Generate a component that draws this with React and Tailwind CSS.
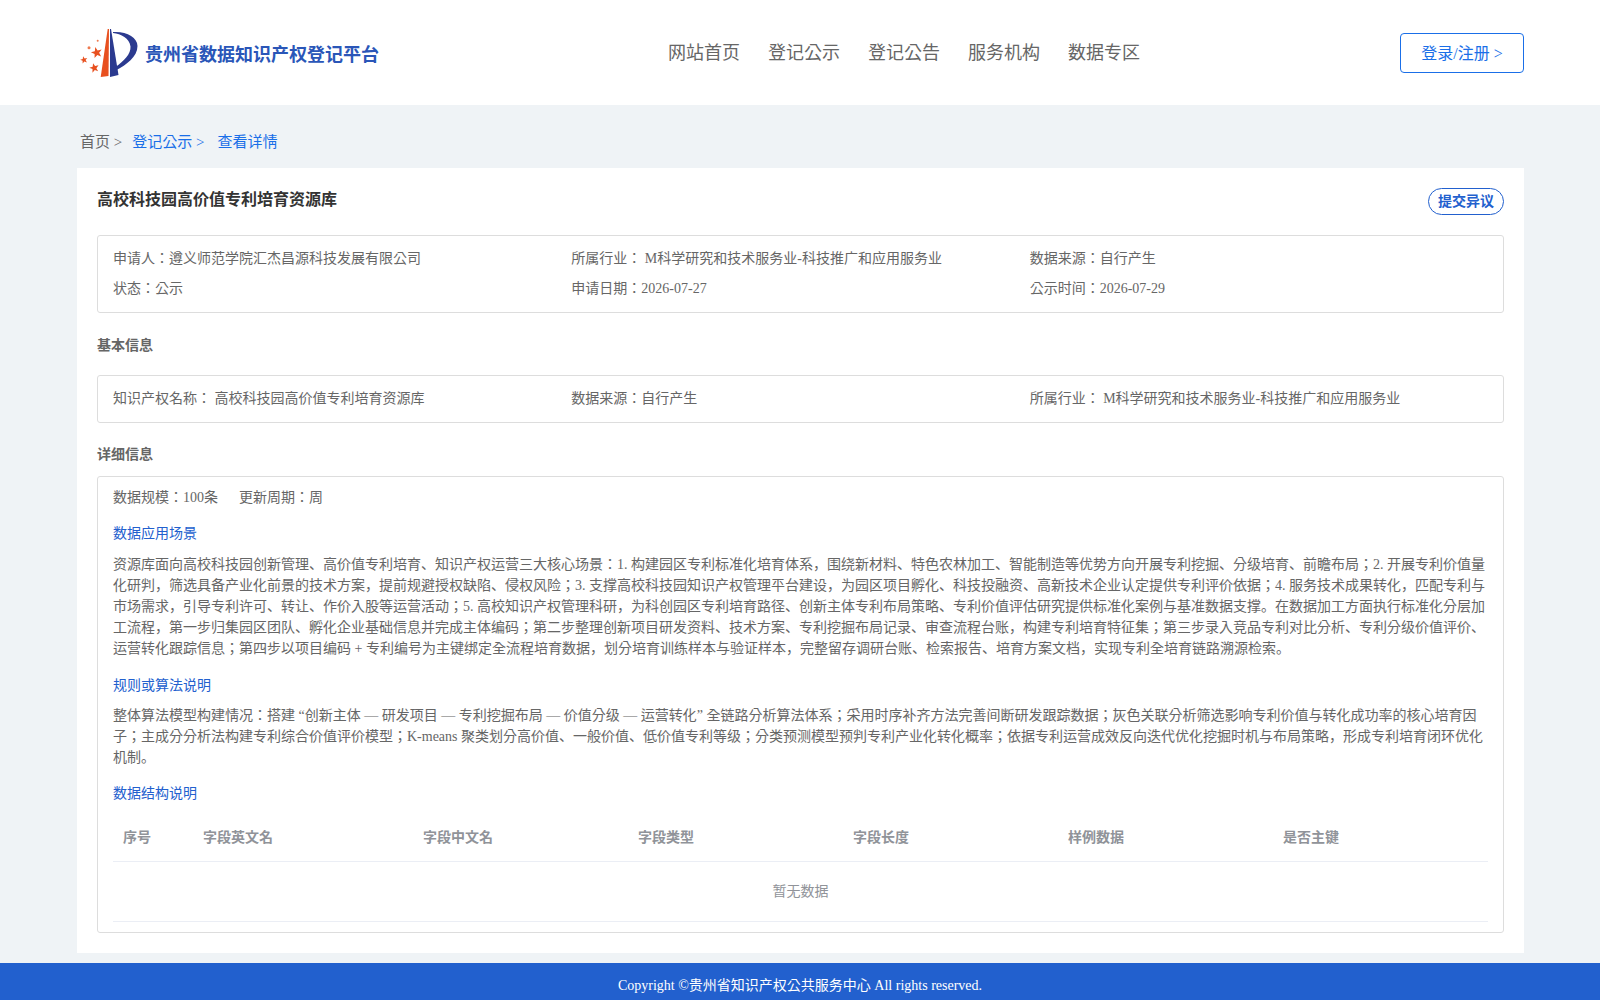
import React from "react";

const nav = ["网站首页", "登记公示", "登记公告", "服务机构", "数据专区"];
const columns = ["序号", "字段英文名", "字段中文名", "字段类型", "字段长度", "样例数据", "是否主键"];

const starPoints = (cx, cy, r) =>
  Array.from({ length: 10 }, (_, i) => {
    const a = -Math.PI / 2 + (i * Math.PI) / 5 - 0.25;
    const d = i % 2 ? r * 0.42 : r;
    return `${cx + d * Math.cos(a)},${cy + d * Math.sin(a)}`;
  }).join(" ");

const Logo = () => (
  <svg width="62" height="54" viewBox="0 0 62 54" className="shrink-0">
    <polygon points="29.7,3 31,3 30.5,50 22.7,51" fill="#e8501f" />
    <polygon points="32,3 33,3 40.5,49 32,51" fill="#2b3a8f" />
    <path d="M35,6 C48,5 59.5,11 59.5,20 C59.5,31 48,39 38.5,44 L37.5,41 C46,35 53,28 52.5,20.5 C51.5,12 43,8 35,7 Z" fill="#2b3a8f" />
    <polygon points={starPoints(18.7, 26.7, 5.8)} fill="#e8501f" />
    <polygon points={starPoints(6, 34, 3.8)} fill="#e8501f" />
    <polygon points={starPoints(16.3, 42, 5)} fill="#e8501f" />
    <circle cx="11" cy="21.7" r="1.5" fill="#ee7a50" />
    <circle cx="19.7" cy="14.7" r="1" fill="#ee7a50" />
  </svg>
);

const Field = ({ children }) => <div className="text-sm leading-[21px]">{children}</div>;

export default function App() {
  return (
    <div className="min-h-[1000px] flex flex-col bg-[#eff3f6] text-[#666] font-['Liberation_Serif','Noto_Sans_CJK_KR',serif]">
      {/* header */}
      <header className="h-[105px] bg-white shrink-0 flex items-center pl-[78px] pr-[76px]">
        <div className="flex items-center w-[590px]">
          <Logo />
          <span className="ml-[5px] mt-[5px] text-lg font-bold text-[#2a56b8]">贵州省数据知识产权登记平台</span>
        </div>
        <nav className="flex gap-[28px] text-lg text-[#666]">
          {nav.map(n => (
            <span key={n}>{n}</span>
          ))}
        </nav>
        <button className="ml-auto w-[124px] h-[40px] border border-[#1a6fe8] rounded text-base text-[#1a6fe8] pt-[2px]">
          登录/注册 &gt;
        </button>
      </header>

      {/* breadcrumb */}
      <div className="h-[63px] shrink-0 flex items-center pl-[80px] pt-[12px] text-[15px]">
        <span>首页 &gt;</span>
        <span className="ml-[10px] text-[#1a6fe8]">登记公示 &gt;</span>
        <span className="ml-[13px] text-[#1a6fe8]">查看详情</span>
      </div>

      {/* card */}
      <main className="ml-[77px] mr-[76px] bg-white px-[20px] pt-[20px] pb-[20px] h-[785px]">
        <div className="flex justify-between items-start h-[47px]">
          <h1 className="text-base font-bold text-[#333] leading-[24px]">高校科技园高价值专利培育资源库</h1>
          <button className="w-[76px] h-[27px] border border-[#2260ce] rounded-full text-sm font-bold text-[#2260ce]">
            提交异议
          </button>
        </div>

        <div className="border border-[#ddd] rounded-[3px] h-[78px] px-[15px] py-[12px] grid grid-cols-3 gap-y-[8px]">
          <Field>申请人：遵义师范学院汇杰昌源科技发展有限公司</Field>
          <Field>所属行业： M科学研究和技术服务业-科技推广和应用服务业</Field>
          <Field>数据来源：自行产生</Field>
          <Field>状态：公示</Field>
          <Field>申请日期：2026-07-27</Field>
          <Field>公示时间：2026-07-29</Field>
        </div>

        <h2 className="mt-[22px] text-sm font-bold leading-[21px]">基本信息</h2>

        <div className="mt-[19px] border border-[#ddd] rounded-[3px] h-[48px] px-[15px] pb-[2px] grid grid-cols-3 items-center">
          <Field>知识产权名称： 高校科技园高价值专利培育资源库</Field>
          <Field>数据来源：自行产生</Field>
          <Field>所属行业： M科学研究和技术服务业-科技推广和应用服务业</Field>
        </div>

        <h2 className="mt-[21px] text-sm font-bold leading-[21px]">详细信息</h2>

        <div className="mt-[11px] border border-[#ddd] rounded-[3px] h-[457px] px-[15px] pt-[10px] text-sm leading-[21px]">
          <div className="flex gap-[21px]">
            <span>数据规模：100条</span>
            <span>更新周期：周</span>
          </div>

          <h3 className="mt-[15px] text-[#2260ce]">数据应用场景</h3>
          <p className="mt-[10px]">
            资源库面向高校科技园创新管理、高价值专利培育、知识产权运营三大核心场景：1. 构建园区专利标准化培育体系，围绕新材料、特色农林加工、智能制造等优势方向开展专利挖掘、分级培育、前瞻布局；2. 开展专利价值量化研判，筛选具备产业化前景的技术方案，提前规避授权缺陷、侵权风险；3. 支撑高校科技园知识产权管理平台建设，为园区项目孵化、科技投融资、高新技术企业认定提供专利评价依据；4. 服务技术成果转化，匹配专利与市场需求，引导专利许可、转让、作价入股等运营活动；5. 高校知识产权管理科研，为科创园区专利培育路径、创新主体专利布局策略、专利价值评估研究提供标准化案例与基准数据支撑。在数据加工方面执行标准化分层加工流程，第一步归集园区团队、孵化企业基础信息并完成主体编码；第二步整理创新项目研发资料、技术方案、专利挖掘布局记录、审查流程台账，构建专利培育特征集；第三步录入竞品专利对比分析、专利分级价值评价、运营转化跟踪信息；第四步以项目编码 + 专利编号为主键绑定全流程培育数据，划分培育训练样本与验证样本，完整留存调研台账、检索报告、培育方案文档，实现专利全培育链路溯源检索。
          </p>

          <h3 className="mt-[16px] text-[#2260ce]">规则或算法说明</h3>
          <p className="mt-[9px]">
            整体算法模型构建情况：搭建 “创新主体 — 研发项目 — 专利挖掘布局 — 价值分级 — 运营转化” 全链路分析算法体系；采用时序补齐方法完善间断研发跟踪数据；灰色关联分析筛选影响专利价值与转化成功率的核心培育因子；主成分分析法构建专利综合价值评价模型；K-means 聚类划分高价值、一般价值、低价值专利等级；分类预测模型预判专利产业化转化概率；依据专利运营成效反向迭代优化挖掘时机与布局策略，形成专利培育闭环优化机制。
          </p>

          <h3 className="mt-[15px] text-[#2260ce]">数据结构说明</h3>

          <div className="mt-[13px] h-[45px] pb-[4px] grid grid-cols-[80px_220px_repeat(5,215px)] items-center border-b border-[#ebeef5] font-bold text-[#909399]">
            {columns.map(c => (
              <div key={c} className="px-[10px]">{c}</div>
            ))}
          </div>
          <div className="h-[60px] flex items-center justify-center border-b border-[#ebeef5] text-[#909399]">
            暂无数据
          </div>
        </div>
      </main>

      {/* footer */}
      <footer className="mt-[10px] h-[37px] shrink-0 bg-[#2260ce] text-white text-sm flex items-center justify-center pt-[8px]">
        Copyright ©贵州省知识产权公共服务中心 All rights reserved.
      </footer>
    </div>
  );
}
